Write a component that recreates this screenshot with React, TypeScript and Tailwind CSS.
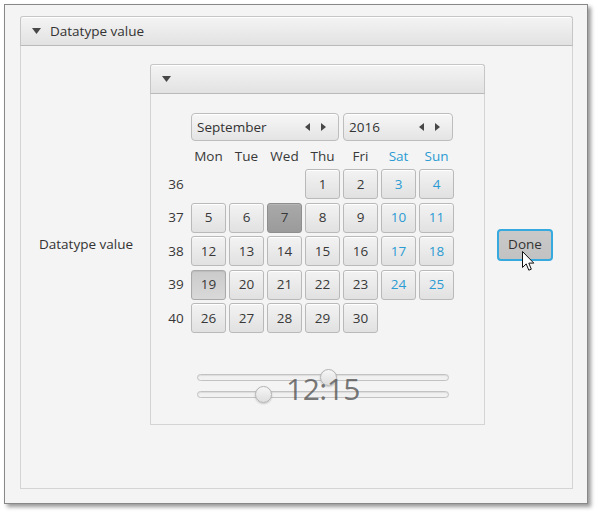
import React from "react"

const font = { fontFamily: '"Open Sans", "Noto Sans", sans-serif' }

// week rows of the calendar, 0 = empty cell
const weeks: { no: number; days: number[] }[] = [
  { no: 36, days: [0, 0, 0, 1, 2, 3, 4] },
  { no: 37, days: [5, 6, 7, 8, 9, 10, 11] },
  { no: 38, days: [12, 13, 14, 15, 16, 17, 18] },
  { no: 39, days: [19, 20, 21, 22, 23, 24, 25] },
  { no: 40, days: [26, 27, 28, 29, 30, 0, 0] },
]

const dayNames = ["Mon", "Tue", "Wed", "Thu", "Fri", "Sat", "Sun"]

function DownTriangle() {
  return (
    <svg width="9" height="6" viewBox="0 0 9 6">
      <path d="M0 0 L9 0 L4.5 6 Z" fill="#474747" />
    </svg>
  )
}

function Arrows() {
  return (
    <div className="flex items-center gap-[11px]">
      <svg width="5" height="8" viewBox="0 0 5 8">
        <path d="M5 0 L5 8 L0 4 Z" fill="#474747" />
      </svg>
      <svg width="5" height="8" viewBox="0 0 5 8">
        <path d="M0 0 L0 8 L5 4 Z" fill="#474747" />
      </svg>
    </div>
  )
}

function PaneHeader({ title }: { title?: string }) {
  return (
    <div className="h-[30px] flex items-center pl-[11px] gap-[9px] rounded-t-[3px] border border-[#c6c6c6] border-b-[#b9b9b9] bg-gradient-to-b from-[#f4f4f4] to-[#e2e2e2] shadow-[inset_0_1px_0_#ffffff]">
      <DownTriangle />
      {title && <span className="text-[13.5px] text-[#333]">{title}</span>}
    </div>
  )
}

function DayCell({ day, weekend }: { day: number; weekend: boolean }) {
  if (!day) return <div />
  let cls =
    "border-[#b9b9b9] bg-gradient-to-b from-[#f3f3f3] to-[#e1e1e1] shadow-[inset_0_1px_0_#ffffff]"
  if (day === 7)
    cls = "border-[#8e8e8e] bg-gradient-to-b from-[#a9a9a9] to-[#9b9b9b] shadow-[inset_0_1px_0_#b5b5b5]"
  if (day === 19)
    cls = "border-[#a9a9a9] bg-gradient-to-b from-[#cbcbcb] to-[#d9d9d9] shadow-[inset_0_1px_1px_#bcbcbc]"
  return (
    <div
      className={`h-[30px] rounded-[3px] border flex items-center justify-center text-[13.5px] ${cls} ${
        weekend ? "text-[#2b9bd3]" : "text-[#383838]"
      }`}
    >
      {day}
    </div>
  )
}

function Slider({ pct }: { pct: number }) {
  return (
    <div className="relative h-[17px] flex items-center">
      <div className="w-full h-[7px] rounded-full border border-[#c2c2c2] bg-[#f1f1f1] shadow-[inset_0_1px_1px_#dcdcdc]" />
      <div
        className="absolute top-0 w-[17px] h-[17px] -ml-[8px] rounded-full border border-[#b3b3b3] bg-gradient-to-b from-[#f6f6f6] to-[#dedede] shadow-[0_1px_2px_rgba(0,0,0,0.2)]"
        style={{ left: `${pct}%` }}
      />
    </div>
  )
}

export default function App() {
  return (
    <div className="w-[600px] h-[517px] bg-white pt-[4px] pl-[4px]" style={font}>
      <div className="w-[584px] h-[500px] border border-[#888] bg-[#f4f4f4] shadow-[3px_3px_4px_rgba(0,0,0,0.4)] pl-[15px] pt-[11px]">
        {/* outer titled pane */}
        <div className="w-[553px] h-[473px] flex flex-col">
          <PaneHeader title="Datatype value" />
          <div className="flex-1 border border-t-0 border-[#d4d4d4] pt-[18px] pl-[18px]">
            <div className="flex items-center">
              <div className="w-[111px] text-[13.5px] text-[#333]">Datatype value</div>

              {/* inner titled pane */}
              <div className="w-[335px] h-[361px] flex flex-col">
                <PaneHeader />
                <div className="flex-1 border border-t-0 border-[#d4d4d4] pl-[13px] pt-[19px]">
                  <div className="flex gap-[4px] ml-[27px]">
                    <div className="w-[148px] h-[28px] rounded-[4px] border border-[#bdbdbd] bg-gradient-to-b from-[#f7f7f7] to-[#e4e4e4] shadow-[inset_0_1px_0_#ffffff] flex items-center justify-between pl-[5px] pr-[12px] text-[13.5px] text-[#333]">
                      <span>September</span>
                      <Arrows />
                    </div>
                    <div className="w-[110px] h-[28px] rounded-[4px] border border-[#bdbdbd] bg-gradient-to-b from-[#f7f7f7] to-[#e4e4e4] shadow-[inset_0_1px_0_#ffffff] flex items-center justify-between pl-[5px] pr-[12px] text-[13.5px] text-[#333]">
                      <span>2016</span>
                      <Arrows />
                    </div>
                  </div>

                  <div className="grid grid-cols-[24px_repeat(7,35px)] gap-x-[3px] mt-[4px] h-[22px] items-center">
                    <div />
                    {dayNames.map((d, i) => (
                      <div
                        key={d}
                        className={`text-center text-[13.5px] ${i >= 5 ? "text-[#2b9bd3]" : "text-[#383838]"}`}
                      >
                        {d}
                      </div>
                    ))}
                  </div>

                  <div className="grid grid-cols-[24px_repeat(7,35px)] gap-x-[3px] gap-y-[3.5px] mt-[2px]">
                    {weeks.map((w) => (
                      <React.Fragment key={w.no}>
                        <div className="h-[30px] flex items-center justify-center text-[13.5px] text-[#383838]">
                          {w.no}
                        </div>
                        {w.days.map((d, i) => (
                          <DayCell key={i} day={d} weekend={i >= 5} />
                        ))}
                      </React.Fragment>
                    ))}
                  </div>

                  {/* time sliders */}
                  <div className="relative w-[252px] ml-[33px] mt-[36px] flex flex-col">
                    <Slider pct={52} />
                    <Slider pct={26} />
                    <div className="absolute inset-0 flex items-center justify-center pt-[5px] text-[30px] leading-none text-[#555]/80 tracking-[-0.5px]">
                      12:15
                    </div>
                  </div>
                </div>
              </div>

              <div className="relative ml-[12px]">
                <button className="w-[56px] h-[32px] rounded-[4px] border-2 border-[#36a9df] bg-gradient-to-b from-[#c9c9c9] to-[#c2c2c2] text-[13.5px] text-[#333] flex items-center justify-center">
                  Done
                </button>
                {/* mouse cursor */}
                <svg
                  className="absolute left-[25px] top-[22px]"
                  width="13"
                  height="21"
                  viewBox="0 0 13 21"
                >
                  <path
                    d="M0.5 0.5 L0.5 16.5 L4.2 12.9 L6.8 19.2 L9.3 18.2 L6.8 12.1 L11.8 12.1 Z"
                    fill="#ffffff"
                    stroke="#111"
                    strokeWidth="1"
                    strokeLinejoin="round"
                  />
                </svg>
              </div>
            </div>
          </div>
        </div>
      </div>
    </div>
  )
}
